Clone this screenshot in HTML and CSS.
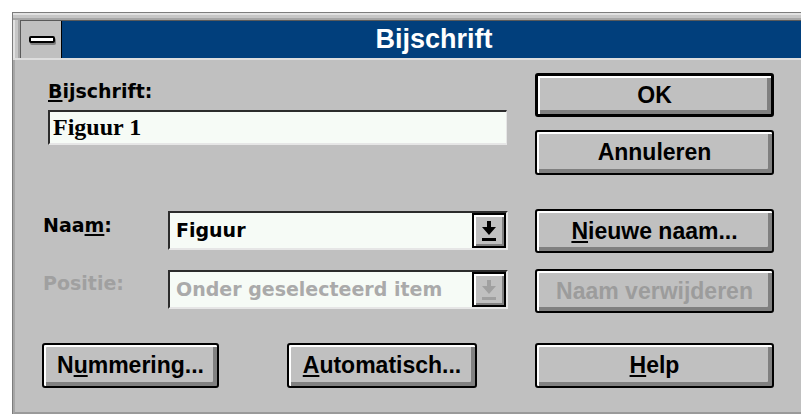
FILE: index.html
```html
<!DOCTYPE html>
<html lang="nl">
<head>
<meta charset="utf-8">
<title>Bijschrift</title>
<link rel="stylesheet" href="styles.css">
</head>
<body>
<div class="window">
  <div class="caption-row">
    <div class="sysbox"><span class="sysbar"></span></div>
    <div class="caption">Bijschrift</div>
  </div>
  <div class="client">
    <div class="form">
      <div class="caption-field">
        <div class="lbl lbl-top"><u>B</u>ijschrift:</div>
        <div class="edit">Figuur 1</div>
      </div>
      <div class="stack">
        <button class="btn btn-default">OK</button>
        <button class="btn btn-tall">Annuleren</button>
      </div>

      <div class="lbl row-a">Naa<u>m</u>:</div>
      <div class="combo row-a">
        <span class="combo-text">Figuur</span>
        <span class="drop">
          <svg width="14" height="20" viewBox="0 0 14 20"><path d="M5 0h4v6h5l-7 8-7-8h5z"/><rect y="17" width="14" height="3"/></svg>
        </span>
      </div>
      <button class="btn row-a"><u>N</u>ieuwe naam...</button>

      <div class="lbl row-b disabled">Positie:</div>
      <div class="combo row-b is-disabled">
        <span class="combo-text">Onder geselecteerd item</span>
        <span class="drop">
          <svg width="14" height="20" viewBox="0 0 14 20"><path d="M5 0h4v6h5l-7 8-7-8h5z"/><rect y="17" width="14" height="3"/></svg>
        </span>
      </div>
      <button class="btn row-b disabled">Naam verwijderen</button>

      <div class="bottom-left">
        <button class="btn btn-tall btn-num">N<u>u</u>mmering...</button>
        <button class="btn btn-tall btn-auto"><u>A</u>utomatisch...</button>
      </div>
      <button class="btn btn-tall row-c"><u>H</u>elp</button>
    </div>
  </div>
</div>
</body>
</html>
```

FILE: styles.css
```css
html, body {
  margin: 0;
  padding: 0;
  background: #ffffff;
  overflow: hidden;
}

body {
  width: 801px;
  height: 415px;
}

.window {
  margin: 12px 0 0 12px;
  width: 801px;
  border-top: 1px solid #7c7c7c;
  border-left: 1px solid #7c7c7c;
  background: #c0c0c0;
}

/* sizing frame around the caption */
.caption-row {
  display: flex;
  padding: 8px 8px 0 8px;
  border-bottom: 2px solid #dedede;
  background:
    linear-gradient(#5a5a5a, #5a5a5a) 7px 7px / 100% 1px no-repeat,
    linear-gradient(#5a5a5a, #5a5a5a) 7px 7px / 1px 100% no-repeat,
    linear-gradient(to bottom, #e2e2e2 0 2px, #c6c6c6 2px 5px, #a6a6a6 5px 7px) 0 0 / 100% 7px no-repeat,
    linear-gradient(to right, #e2e2e2 0 2px, #c6c6c6 2px 5px, #a6a6a6 5px 7px) 0 0 / 7px 100% no-repeat,
    #c6c6c6;
}

.sysbox {
  width: 40px;
  height: 37px;
  border-right: 1px solid #000;
  background: #c0c0c0;
  display: flex;
  align-items: center;
  justify-content: center;
}

.sysbar {
  display: block;
  width: 22px;
  height: 3px;
  border: 2px solid #000;
  border-radius: 2px;
  background: #ffffff;
  box-shadow: 1px 2px 0 #808080;
  margin-left: 1px;
}

.caption {
  flex: 1;
  height: 37px;
  background: #013f7c;
  color: #ffffff;
  font: bold 27px/37px "Liberation Sans", Arial, sans-serif;
  text-align: center;
}

.client {
  box-sizing: border-box;
  height: 354px;
  padding: 13px 0 0 28px;
  border-left: 2px solid #a6a6a6;
  border-bottom: 2px solid #9a9a9a;
  background: #c0c0c0;
}

.form {
  display: grid;
  grid-template-columns: 125px 340px 27px 239px;
  grid-template-rows: 102px 34px 44px 16px 44px 30px 45px;
}

.lbl {
  font: bold 19px/22px "DejaVu Sans", sans-serif;
  color: #000;
  white-space: nowrap;
}

.lbl.disabled {
  color: #a0a0a0;
}

u {
  text-decoration-thickness: 2px;
  text-underline-offset: 2px;
}

.caption-field {
  grid-column: 1 / 3;
  grid-row: 1;
  padding-left: 5px;
}

.lbl-top {
  margin-top: 7px;
}

.edit {
  box-sizing: border-box;
  width: 459px;
  height: 35px;
  margin-top: 8px;
  padding-left: 3px;
  border-top: 2px solid #2c2c2c;
  border-left: 2px solid #2c2c2c;
  border-right: 1px solid #e6e6e6;
  border-bottom: 2px solid #e6e6e6;
  background: #f6fbf6;
  font: bold 24px/31px "Liberation Serif", "Times New Roman", serif;
  color: #000;
}

.stack {
  grid-column: 4;
  grid-row: 1;
  display: flex;
  flex-direction: column;
  gap: 13px;
}

/* push buttons */
.btn {
  box-sizing: border-box;
  width: 100%;
  height: 44px;
  margin: 0;
  padding: 0;
  border: 2px solid #000;
  border-radius: 3px;
  background: #c0c0c0;
  box-shadow: inset 2px 2px 0 #ffffff, inset -4px -4px 0 #808080;
  font: bold 23px "Liberation Sans", Arial, sans-serif;
  color: #000;
  display: flex;
  align-items: center;
  justify-content: center;
  white-space: nowrap;
}

.btn-tall {
  height: 45px;
}

.btn-default {
  border-width: 3px;
}

.btn.disabled {
  color: #9c9c9c;
}

.row-a {
  grid-row: 3;
}

.row-b {
  grid-row: 5;
}

.row-c {
  grid-row: 7;
  grid-column: 4;
}

.lbl.row-a {
  grid-column: 1;
  margin-top: 5px;
}

.lbl.row-b {
  grid-column: 1;
  margin-top: 3px;
}

.btn.row-a,
.btn.row-b {
  grid-column: 4;
}

/* drop-down list boxes */
.combo {
  grid-column: 2;
  box-sizing: border-box;
  height: 39px;
  margin-top: 2px;
  display: flex;
  align-items: stretch;
  border-top: 2px solid #2c2c2c;
  border-left: 2px solid #2c2c2c;
  border-right: 2px solid #e6e6e6;
  border-bottom: 2px solid #e6e6e6;
  background: #f6fbf6;
}

.combo.row-b {
  margin-top: 1px;
}

.combo-text {
  flex: 1;
  padding-left: 6px;
  font: bold 19px/35px "DejaVu Sans", sans-serif;
  color: #000;
  white-space: nowrap;
  overflow: hidden;
}

.combo.is-disabled .combo-text {
  color: #aaaaaa;
}

.drop {
  box-sizing: border-box;
  width: 34px;
  border: 2px solid #000;
  background: #c0c0c0;
  box-shadow: inset 2px 2px 0 #ffffff, inset -2px -2px 0 #808080;
  display: flex;
  align-items: center;
  justify-content: center;
}

.drop svg {
  fill: #000;
}

.combo.is-disabled .drop svg {
  fill: #a0a0a0;
}

.bottom-left {
  grid-column: 1 / 3;
  grid-row: 7;
  display: flex;
  gap: 68px;
  margin-left: -1px;
}

.btn-num {
  width: 177px;
}

.btn-auto {
  width: 190px;
}
```
